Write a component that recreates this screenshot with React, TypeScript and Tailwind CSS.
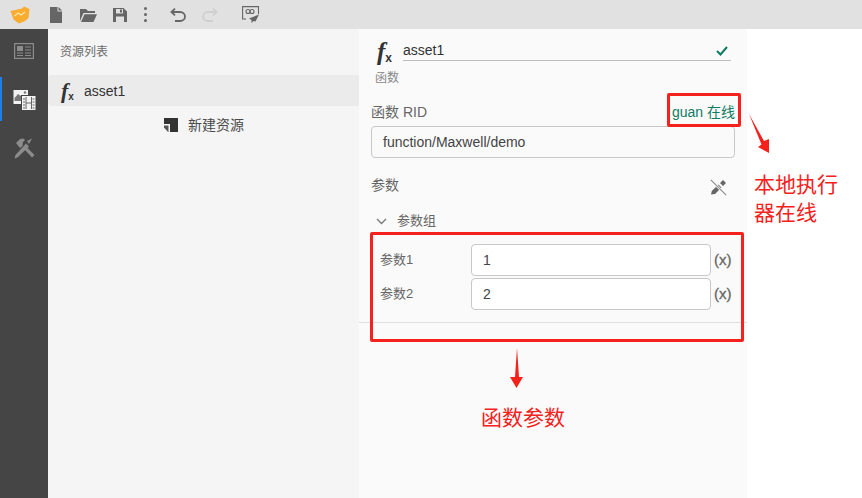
const font = 'font-["Liberation_Sans","Noto_Sans_CJK_SC",sans-serif]';

function FxIcon({ big = false }: { big?: boolean }) {
  return (
    <span className={`flex items-end font-["Liberation_Serif",serif] italic font-bold text-[#333] leading-none ${big ? 'text-[25px]' : 'text-[22px]'}`}>
      f
      <span className={`not-italic font-["Liberation_Sans",sans-serif] ${big ? 'text-[12px]' : 'text-[10px]'}`}>x</span>
    </span>
  );
}

function TopBar() {
  return (
    <div className="flex h-[29px] shrink-0 items-center bg-[#e1e1e1]">
      <svg className="ml-[10px]" width="20" height="18" viewBox="0 0 20 18">
        <path d="M0.5 5 L12 2.5 L14 0.5 L19.5 3 L18.5 12 L15 15 L9 17.5 L3.5 13.5 Z" fill="#f9ac2f" />
        <path d="M4.5 10 L8 7 L11 9 L15 6" fill="none" stroke="#ffe6a8" strokeWidth="1.2" />
      </svg>
      <svg className="ml-[20px]" width="12" height="16" viewBox="0 0 12 16" fill="#666">
        <path d="M0 0 H7.5 V4.5 H12 V16 H0 Z" />
        <path d="M8.5 0 L12 3.5 H8.5 Z" />
      </svg>
      <svg className="ml-[18px]" width="17" height="14" viewBox="0 0 17 14" fill="#666">
        <path d="M0 13 V1 H6 L8 3 H15 V5 H3.5 L0 13 Z" />
        <path d="M1 14 L4.5 6.2 H17 L13.5 14 Z" />
      </svg>
      <svg className="ml-[16px]" width="14" height="14" viewBox="0 0 14 14" fill="#666">
        <path fillRule="evenodd" d="M0 0 H10.5 L14 3.5 V14 H0 Z M3 1 V5.5 H10 V1 Z M3 8.5 V14 H11 V8.5 Z" />
        <rect x="7" y="1.5" width="2" height="3" />
      </svg>
      <div className="ml-[17px] flex flex-col gap-[3px]">
        <span className="h-[3px] w-[3px] rounded-full bg-[#666]" />
        <span className="h-[3px] w-[3px] rounded-full bg-[#666]" />
        <span className="h-[3px] w-[3px] rounded-full bg-[#666]" />
      </div>
      <svg className="ml-[23px]" width="16" height="14" viewBox="0 0 16 14" fill="none" stroke="#666" strokeWidth="1.8">
        <path d="M2 4 H10 C13 4 15 6 15 8.5 C15 11 13 13 10 13 H5" />
        <path d="M5 0.7 L1.4 4 L5 7.3" />
      </svg>
      <svg className="ml-[16px]" width="16" height="14" viewBox="0 0 16 14" fill="none" stroke="#cfcfcf" strokeWidth="1.8">
        <path d="M14 4 H6 C3 4 1 6 1 8.5 C1 11 3 13 6 13 H11" />
        <path d="M11 0.7 L14.6 4 L11 7.3" />
      </svg>
      <svg className="ml-[24px]" width="18" height="18" viewBox="0 0 18 18" fill="none" stroke="#666">
        <path d="M4 13 H0.6 V0.6 H16.5 V8" strokeWidth="1.1" />
        <circle cx="6" cy="5.5" r="2" strokeWidth="1.1" />
        <circle cx="10" cy="5.5" r="2" strokeWidth="1.1" />
        <path d="M17 8.5 L7 12.5 L9.5 14 L9.5 17 L11.5 15 L13.5 15.5 Z" fill="#666" stroke="none" />
      </svg>
    </div>
  );
}

function SideBar() {
  return (
    <div className="flex w-[48px] shrink-0 flex-col bg-[#454545]">
      <div className="flex h-[48px] items-start justify-center pt-[14px]">
        <svg width="20" height="16" viewBox="0 0 20 16">
          <rect x="0.6" y="0.6" width="18.8" height="14.8" fill="none" stroke="#8c8c8c" strokeWidth="1.2" />
          <rect x="3" y="3" width="6" height="5" fill="#8c8c8c" />
          <path d="M3 10 H9 M3 12.5 H9 M11 4 H17 M11 7 H17 M11 10 H17 M11 12.5 H17" stroke="#8c8c8c" />
        </svg>
      </div>
      <div className="flex h-[44px] items-center justify-center border-l-[2px] border-[#1a7fe8] pr-[2px]">
        <svg width="23" height="21" viewBox="0 0 23 21">
          <path d="M0.5 1 H15 V6 H8 V15 H0.5 Z" fill="#f2f2f2" />
          <path d="M1.5 9 L5 5 L8 7 V12 H1.5 Z" fill="#777" />
          <circle cx="12" cy="3.5" r="1.2" fill="#777" />
          <rect x="9" y="7" width="13.5" height="14" fill="#f2f2f2" />
          <path d="M13 8 V20 M18.5 8 V20 M13 14 H18.5" stroke="#666" />
          <path d="M10 10 H12 M10 13 H12 M10 16 H12 M10 19 H12 M19.5 10 H21.5 M19.5 13 H21.5 M19.5 16 H21.5 M19.5 19 H21.5" stroke="#666" />
        </svg>
      </div>
      <div className="flex h-[54px] items-center justify-center">
        <svg width="21" height="21" viewBox="0 0 21 21" fill="#8c8c8c">
          <path d="M1.5 17 L12 5.5 L15 8.5 L3.5 19.5 L0.5 20.5 Z" />
          <path d="M2 5 L6 1 L9.5 0.5 L11 2 L9 4 L8.5 8 L6 10 Z" />
          <path d="M10.5 11.5 L13 9.5 L20.5 17 L18 19.5 Z" />
          <path d="M13 3 L18 0.5 L15 6 Z" />
        </svg>
      </div>
    </div>
  );
}

function ListPanel() {
  return (
    <div className="flex w-[311px] shrink-0 flex-col bg-[#f5f5f5]">
      <div className="flex h-[46px] items-center pl-[12px] text-[12px] text-[#6b6b6b]">资源列表</div>
      <div className="flex h-[31px] items-center rounded-l-[4px] bg-[#ebebeb] pl-[13px]">
        <div className="w-[23px]">
          <FxIcon />
        </div>
        <span className="pt-[2px] text-[14px] text-[#333]">asset1</span>
      </div>
      <div className="mt-[12px] flex items-center pl-[116px]">
        <svg width="14" height="14" viewBox="0 0 14 14" fill="#333">
          <path d="M0 0 H14 V14 H6 V6 H0 Z" />
          <path d="M0 7.5 H4.5 V14 H4 L0 9.5 Z" fill="#555" />
        </svg>
        <span className="ml-[10px] text-[14px] leading-[14px] text-[#4a4a4a]">新建资源</span>
      </div>
    </div>
  );
}

function ParamRow({ label, value }: { label: string; value: string }) {
  return (
    <div className="flex h-[32px] items-center">
      <span className="w-[100px] pl-[9px] text-[13px] text-[#666]">{label}</span>
      <div className="flex h-[32px] w-[240px] items-center rounded-[4px] border border-[#c8c8c8] bg-white pl-[11px] text-[14px] text-[#444]">
        {value}
      </div>
      <span className="ml-[3px] text-[15px] text-[#666] [-webkit-text-stroke:0.3px_#666]">(x)</span>
    </div>
  );
}

function DetailPanel() {
  return (
    <div className="flex w-[388px] shrink-0 flex-col bg-[#fafafa]">
      <div className="mt-[12px] flex h-[20px] items-center pl-[18px]">
        <div className="w-[26px]">
          <FxIcon big />
        </div>
        <div className="flex h-[20px] w-[328px] items-center justify-between border-b border-[#bdbdbd] pr-[3px] text-[14px] text-[#333]">
          <span>asset1</span>
          <svg width="12" height="10" viewBox="0 0 12 10" fill="none" stroke="#0f7b5f" strokeWidth="2">
            <path d="M1 5 L4.5 8.5 L11 1" />
          </svg>
        </div>
      </div>
      <div className="mt-[9px] pl-[16px] text-[12px] leading-[16px] text-[#888]">函数</div>
      <div className="mt-[17px] flex w-[376px] items-center justify-between pl-[12px] text-[14px] leading-[18px]">
        <span className="text-[#666]">函数 RID</span>
        <span className="text-[#0f7b63]">guan 在线</span>
      </div>
      <div className="ml-[12px] mt-[5px] flex h-[32px] w-[364px] items-center rounded-[4px] border border-[#c8c8c8] bg-[#fafafa] pl-[11px] text-[14px] text-[#444]">
        function/Maxwell/demo
      </div>
      <div className="mt-[18px] flex h-[22px] w-[368px] items-center justify-between pl-[12px] text-[14px] text-[#666]">
        <span className="mb-[4px]">参数</span>
        <svg width="17" height="17" viewBox="0 0 17 17">
          <path d="M1 15.5 L1.8 12 L8.5 5.5 L11.5 8.5 L5 15 Z M10 4 L13 1 L16 4 L13 7 Z" fill="#666" />
          <path d="M0.8 0.8 L16.2 16.2" stroke="#fafafa" strokeWidth="2.6" />
          <path d="M0.8 0.8 L16.2 16.2" stroke="#8a8a8a" strokeWidth="1.1" />
        </svg>
      </div>
      <div className="mt-[15px] flex h-[16px] items-center pl-[17px] text-[13px] text-[#666]">
        <svg width="11" height="7" viewBox="0 0 11 7" fill="none" stroke="#777" strokeWidth="1.3">
          <path d="M1 1 L5.5 5.5 L10 1" />
        </svg>
        <span className="ml-[10px]">参数组</span>
      </div>
      <div className="mt-[15px] flex flex-col gap-[2px] pl-[12px]">
        <ParamRow label="参数1" value="1" />
        <ParamRow label="参数2" value="2" />
      </div>
      <div className="mt-[12px] h-px bg-[#e0e0e0]" />
    </div>
  );
}

function Annotations() {
  return (
    <>
      <div className="absolute left-[667px] top-[93px] h-[34px] w-[74px] rounded-[2px] border-[3px] border-[#f5211c]" />
      <div className="absolute left-[370px] top-[232px] h-[110px] w-[374px] rounded-[2px] border-[3px] border-[#f5211c]" />
      <svg className="absolute left-[745px] top-[110px]" width="30" height="46" viewBox="0 0 30 46" fill="#f5211c">
        <path d="M4 4 L19 31 L24 29 L24 43 L13 37 L16.5 34.5 Z" />
      </svg>
      <svg className="absolute left-[505px] top-[345px]" width="24" height="46" viewBox="0 0 24 46" fill="#f5211c">
        <path d="M12 3 L14 32 L18 32 L11.5 43 L5 32 L10 32 Z" />
      </svg>
      <div className="absolute left-[754px] top-[171px] w-[90px] text-[21px] leading-[28px] text-[#f5211c]">
        本地执行器在线
      </div>
      <div className="absolute left-[481px] top-[404px] text-[21px] leading-[28px] text-[#f5211c]">函数参数</div>
    </>
  );
}

export default function App() {
  return (
    <div className={`relative flex h-[498px] w-[862px] flex-col overflow-hidden bg-white ${font}`}>
      <TopBar />
      <div className="flex flex-1">
        <SideBar />
        <ListPanel />
        <DetailPanel />
      </div>
      <Annotations />
    </div>
  );
}
